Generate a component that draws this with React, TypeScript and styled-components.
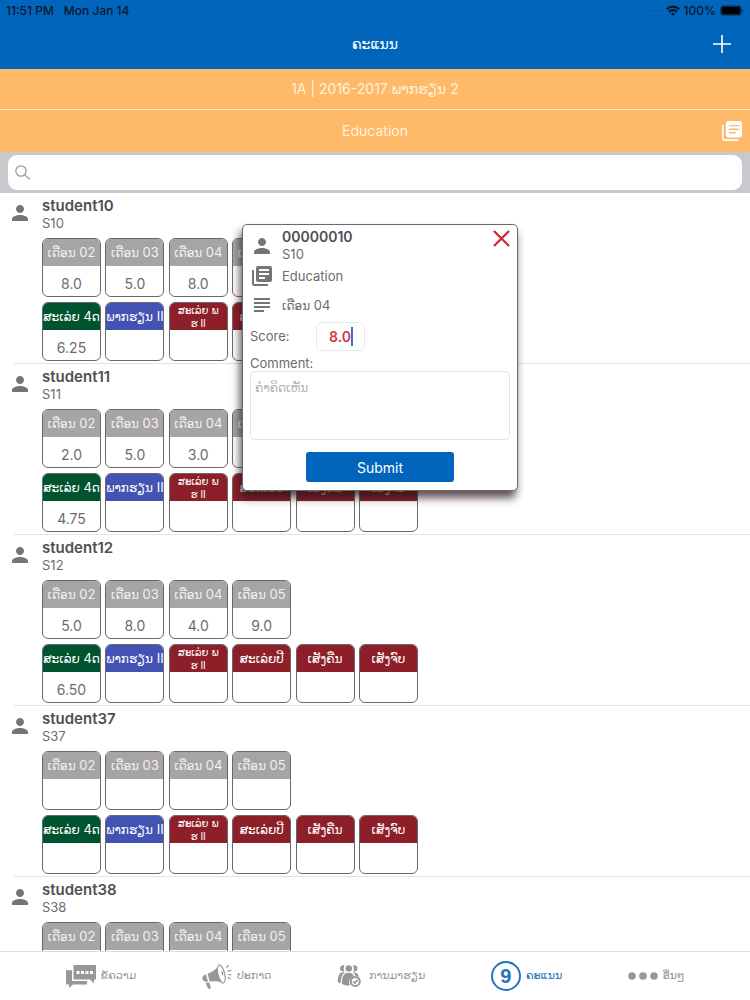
import React from "react";
import styled, { createGlobalStyle } from "styled-components";
import { MdLibraryBooks, MdPerson, MdSubject } from "react-icons/md";

const GlobalStyle = createGlobalStyle`
  *, *::before, *::after { box-sizing: border-box; }
  body { margin: 0; background: #fff; }
  button, input, textarea { font: inherit; }
`;

const colors = {
  blue: "#0265bc",
  orange: "#feba69",
  grey: "#a6a4a7",
  green: "#00532f",
  indigo: "#4253b4",
  red: "#8d1f29",
  text: "#6c6c6e",
};

const Screen = styled.div`
  position: relative;
  display: flex;
  flex-direction: column;
  height: 100vh;
  overflow: hidden;
  background: #fff;
  color: ${colors.text};
  font-family: Inter, "DejaVu Sans", sans-serif;
  font-size: 14px;
`;

const Lao = styled.span<{ $size?: number }>`
  font-family: "DejaVu Sans", sans-serif;
  font-size: ${({ $size = 12 }) => $size}px;
`;

const Header = styled.header`
  flex: none;
  height: 69px;
  background: ${colors.blue};
  color: #fff;
`;

const StatusBar = styled.div`
  display: flex;
  align-items: center;
  height: 20px;
  padding: 0 6px;
  color: #06182c;
  font-size: 12px;
  font-weight: 500;
`;

const StatusDate = styled.span`
  margin-left: 10px;
`;

const StatusRight = styled.div`
  display: flex;
  align-items: center;
  gap: 4px;
  margin-left: auto;
`;

const NavBar = styled.div`
  display: grid;
  grid-template-columns: 32px 1fr 32px;
  align-items: center;
  height: 48px;
  padding: 0 12px;
`;

const Title = styled.h1`
  grid-column: 2;
  margin: 0;
  text-align: center;
  font-size: 14px;
  font-weight: 400;
  line-height: 20px;
`;

const IconButton = styled.button`
  display: flex;
  align-items: center;
  justify-content: center;
  padding: 0;
  border: 0;
  background: none;
  color: inherit;
`;

const CloseButton = styled(IconButton)`
  align-self: flex-start;
  padding-top: 2px;
`;

const Band = styled.div<{ $divided?: boolean }>`
  flex: none;
  display: grid;
  grid-template-columns: 24px 1fr 24px;
  align-items: center;
  height: ${({ $divided }) => ($divided ? 41 : 42)}px;
  padding: 0 6px;
  background: ${colors.orange};
  border-bottom: ${({ $divided }) => ($divided ? "1px solid #ffe6c6" : "0")};
  color: #fff1de;
`;

const BandText = styled.div`
  grid-column: 2;
  text-align: center;
  line-height: 20px;
`;

const SearchBar = styled.form`
  flex: none;
  padding: 3px 8px;
  background: #c9c8cc;
`;

const SearchField = styled.label`
  display: flex;
  align-items: center;
  gap: 8px;
  height: 35px;
  padding: 0 7px;
  border-radius: 9px;
  background: #fff;
  color: #9a9a9c;
`;

const SearchInput = styled.input`
  flex: 1;
  min-width: 0;
  border: 0;
  outline: 0;
  background: none;
  color: ${colors.text};
`;

const List = styled.main`
  flex: 1;
  min-height: 0;
  overflow: hidden;
`;

const Student = styled.section`
  display: flex;
  gap: 10px;
  margin-left: 14px;
  padding: 4px 0 2px;
  border-bottom: 1px solid #e2e1e3;
`;

const Avatar = styled.div`
  flex: none;
  width: 24px;
  margin-left: -6px;
  padding-top: 4px;
  color: #757575;
`;

const StudentName = styled.h2<{ $compact?: boolean }>`
  margin: 0;
  color: #4f4f51;
  font-size: ${({ $compact }) => ($compact ? 14 : 15)}px;
  font-weight: 600;
  line-height: 18px;
`;

const StudentCode = styled.p`
  margin: 0;
  font-size: 13px;
  line-height: 17px;
`;

const Scores = styled.dl`
  display: grid;
  grid-template-columns: repeat(6, 59px);
  justify-content: space-between;
  row-gap: 5px;
  width: 376px;
  margin: 6px 0 0;
`;

const Cell = styled.div<{ $first?: boolean }>`
  grid-column: ${({ $first }) => ($first ? "1" : "auto")};
  height: 59px;
  border: 1px solid #69696b;
  border-radius: 6px;
  background: #fff;
  overflow: hidden;
`;

const CellHead = styled.dt<{ $color: string; $small?: boolean }>`
  display: flex;
  align-items: center;
  justify-content: center;
  height: 27px;
  background: ${({ $color }) => $color};
  color: ${({ $color }) => ($color === colors.grey ? "#f1f0f1" : "#fff")};
  font-size: ${({ $small }) => ($small ? 10 : 13)}px;
  line-height: ${({ $small }) => ($small ? 13 : 18)}px;
  text-align: center;
  white-space: ${({ $small }) => ($small ? "normal" : "nowrap")};
`;

const CellValue = styled.dd`
  margin: 0;
  padding-top: 8px;
  line-height: 20px;
  text-align: center;
`;

const Dialog = styled.div`
  position: absolute;
  top: 224px;
  left: 242px;
  width: 276px;
  padding: 3px 7px 8px;
  border: 1px solid #69696b;
  border-radius: 5px;
  background: #fff;
  box-shadow: -2px 7px 9px rgba(40, 20, 25, 0.75);
`;

const DialogRow = styled.div<{ $height: number }>`
  display: flex;
  align-items: center;
  gap: 8px;
  height: ${({ $height }) => $height}px;
  font-size: 13px;

  > svg {
    flex: none;
    color: #757575;
  }
`;

const DialogHeading = styled.div`
  flex: 1;
`;

const ScoreLabel = styled.label`
  width: 58px;
`;

const ScoreField = styled.div`
  display: flex;
  align-items: center;
  justify-content: flex-end;
  width: 49px;
  height: 29px;
  padding-right: 11px;
  border: 1px solid #e9e9ee;
  border-radius: 6px;
`;

const ScoreInput = styled.input`
  width: 25px;
  padding: 0;
  border: 0;
  outline: 0;
  background: none;
  color: #d3393f;
  font-size: 14px;
  font-weight: 600;
  text-align: right;
`;

const Caret = styled.span`
  flex: none;
  width: 2px;
  height: 19px;
  background: #3f6cd0;
`;

const CommentLabel = styled.label`
  display: block;
  margin-top: 4px;
  font-size: 13px;
  line-height: 16px;
`;

const CommentInput = styled.textarea`
  display: block;
  width: 100%;
  height: 69px;
  padding: 7px 4px;
  border: 1px solid #e2e2e6;
  border-radius: 5px;
  outline: 0;
  resize: none;
  font-family: "DejaVu Sans", sans-serif;
  font-size: 12px;
  line-height: 18px;

  &::placeholder {
    color: #b4b2b6;
  }
`;

const SubmitButton = styled.button`
  display: block;
  width: 148px;
  height: 30px;
  margin: 12px auto 0;
  padding: 0;
  border: 0;
  border-radius: 3px;
  background: ${colors.blue};
  color: #fff;
  font-size: 14px;
`;

const TabBar = styled.nav`
  flex: none;
  display: flex;
  align-items: center;
  justify-content: space-evenly;
  height: 49px;
  border-top: 1px solid #dedddf;
  background: #fff;
`;

const Tab = styled.a<{ $active?: boolean }>`
  display: flex;
  align-items: center;
  gap: 5px;
  color: ${({ $active }) => ($active ? "#2673bd" : "#98969a")};
  text-decoration: none;
  line-height: 20px;
`;

const TabBadge = styled.span`
  display: flex;
  align-items: center;
  justify-content: center;
  width: 30px;
  height: 30px;
  border: 2px solid #2673bd;
  border-radius: 50%;
  font-family: "Liberation Sans", sans-serif;
  font-size: 20px;
  font-weight: 700;
`;

const SignalIcon = () => (
  <svg width="14" height="4" viewBox="0 0 14 4" fill="#07509a">
    <path d="M0 2h2v1.500H0zM4 2h2v1.500H4zM8 2h2v1.500H8zM12 2h2v1.500h-2z" />
  </svg>
);

const WifiIcon = () => (
  <svg width="14" height="11" viewBox="0 0 14 11" fill="none" stroke="#06182c" strokeWidth="2.2">
    <path d="M0.8 4.2a8.8 8.8 0 0 1 12.4 0M3 6.9a5.6 5.6 0 0 1 8 0" />
    <path d="M7 10.800 4.900 8.700a3 3 0 0 1 4.200 0z" fill="#06182c" stroke="none" />
  </svg>
);

const BatteryIcon = () => (
  <svg width="24" height="11" viewBox="0 0 24 11">
    <rect x="0.5" y="0.5" width="21" height="10" rx="2.5" fill="none" stroke="#06407c" />
    <rect x="1.5" y="1.5" width="19" height="8" rx="1.5" fill="#000" />
    <path d="M22.7 4v3c.8-.3 1.1-.9 1.1-1.5s-.3-1.2-1.1-1.5z" fill="#06407c" />
  </svg>
);

const PlusIcon = () => (
  <svg width="18" height="18" viewBox="0 0 18 18" stroke="#fff" strokeWidth="1.6">
    <path d="M9 0v18M0 9h18" />
  </svg>
);

const SubjectsIcon = () => (
  <svg width="24" height="24" viewBox="0 0 24 24" fill="none">
    <path d="M2.8 6.5v12.2a2.5 2.5 0 0 0 2.5 2.5h12.2" stroke="#fff" strokeWidth="1.7" strokeLinecap="round" />
    <rect x="5.8" y="2" width="16.2" height="16.4" rx="2.8" fill="#fff" />
    <path d="M9.3 6.6h9.4M9.3 10.2h9.4M9.3 13.8h6" stroke={colors.orange} strokeWidth="1.4" strokeLinecap="round" />
  </svg>
);

const SearchIcon = () => (
  <svg width="15" height="15" viewBox="0 0 15 15" fill="none" stroke="currentColor" strokeWidth="1.3" strokeLinecap="round">
    <circle cx="6" cy="6" r="5.2" />
    <path d="M9.9 9.9l4.3 4.1" />
  </svg>
);

const CloseIcon = () => (
  <svg width="17" height="17" viewBox="0 0 18 18" stroke="#cf2a30" strokeWidth="2.4">
    <path d="M1 1l16 16M17 1 1 17" />
  </svg>
);

const MessagesIcon = () => (
  <svg width="30" height="23" viewBox="0 0 30 23" fill="currentColor">
    <path d="M7.5 0H30v14.4h-2v4l-4.2-4H7.5z" />
    <path d="M0 5.2h6v10.7h15v3.6H7l-4 3.5v-3.5H0z" />
    <path d="M10.5 6h3v3h-3zM15 6h3v3h-3zM19.5 6h3v3h-3zM24 6h3v3h-3z" fill="#fff" />
  </svg>
);

const MegaphoneIcon = () => (
  <svg width="30" height="25" viewBox="0 0 30 25" fill="currentColor">
    <path d="M17 1.2C13.5 6 9.500 8.300 5.500 9.800L7.800 17.700c4-.9 8.800-.6 13.400 1.300z" />
    <path d="M4 10.400C1 11.300 0 13 .4 14.800s2 3.300 5.600 3z" />
    <path d="M3.400 18.800l3.900-.4 1.500 5.300c-.3 1-1.700 1.500-2.700.9z" />
    <ellipse cx="19.300" cy="10" rx="3.300" ry="9.300" transform="rotate(-14 19.300 10)" fill="#fff" stroke="currentColor" strokeWidth="1.200" />
    <path d="M19 7.200c2-.3 3.300 3.500 1.400 4.600z" />
    <path d="M24.300 3.500l2.400-2.200M25.600 7.200l3.600-.9M26 10.500l3.400.4M25.600 13.200l2.800 1.800" stroke="currentColor" strokeWidth="1.200" fill="none" />
  </svg>
);

const AttendanceIcon = () => (
  <svg width="27" height="22" viewBox="0 0 27 22" fill="currentColor">
    <path d="M7.600.6C5.600-.3 3.200.8 3 3.200c0 2.500 2.200 3.900 4.300 3A6 6 0 0 1 7.600.6zM16 .6c2-.9 4.400.2 4.600 2.600 0 2.500-2.200 3.900-4.300 3A6 6 0 0 0 16 .6z" />
    <circle cx="11.800" cy="3.400" r="3.200" />
    <path d="M7 7.300C2.800 7 1 10 .6 16.800c1 .8 2 1.200 3.200 1.400C3.900 13 4.600 9.700 7.800 7.500zM16 7.300c3.300-.1 5.200 1.400 6 4.500l-3.600-.8c-.5-1.600-1.300-2.900-2.600-3.700z" />
    <path d="M11.800 7.700c-4.900 0-6.700 3-7 11 2.200 1.500 5 2.100 8.200 1.600a6 6 0 0 1 4-9c-1-2.500-2.700-3.600-5.200-3.600z" />
    <circle cx="18.300" cy="16.400" r="4.500" fill="#fff" stroke="currentColor" strokeWidth="2" />
    <path d="M16.200 16.500l1.600 1.500 2.800-3.100" fill="none" stroke="currentColor" strokeWidth="1.700" />
  </svg>
);

const MoreIcon = () => (
  <svg width="30" height="8" viewBox="0 0 30 8" fill="currentColor">
    <circle cx="4" cy="4" r="3.800" />
    <circle cx="15" cy="4" r="3.800" />
    <circle cx="26" cy="4" r="3.800" />
  </svg>
);

type StudentData = { name: string; code: string; months: string[]; average: string };

const students: StudentData[] = [
  { name: "student10", code: "S10", months: ["8.0", "5.0", "8.0", ""], average: "6.25" },
  { name: "student11", code: "S11", months: ["2.0", "5.0", "3.0", ""], average: "4.75" },
  { name: "student12", code: "S12", months: ["5.0", "8.0", "4.0", "9.0"], average: "6.50" },
  { name: "student37", code: "S37", months: ["", "", "", ""], average: "" },
  { name: "student38", code: "S38", months: ["", "", "", ""], average: "" },
];

const finals = ["ສະເລ່ຍປີ", "ເສັງຄືນ", "ເສັງຈົບ"];

function StudentRow({ student }: { student: StudentData }) {
  return (
    <Student>
      <Avatar>
        <MdPerson size={24} />
      </Avatar>
      <div>
        <StudentName>{student.name}</StudentName>
        <StudentCode>{student.code}</StudentCode>
        <Scores>
          {student.months.map((score, i) => (
            <Cell key={i}>
              <CellHead $color={colors.grey}>
                <span>
                  <Lao>ເດືອນ</Lao> 0{i + 2}
                </span>
              </CellHead>
              <CellValue>{score}</CellValue>
            </Cell>
          ))}
          <Cell $first>
            <CellHead $color={colors.green}>
              <span>
                <Lao>ສະເລ່ຍ</Lao> 4<Lao>ດ</Lao>
              </span>
            </CellHead>
            <CellValue>{student.average}</CellValue>
          </Cell>
          <Cell>
            <CellHead $color={colors.indigo}>
              <span>
                <Lao>ພາກຮຽນ</Lao> II
              </span>
            </CellHead>
            <CellValue />
          </Cell>
          <Cell>
            <CellHead $color={colors.red} $small>
              <span>
                <Lao $size={10}>ສະເລ່ຍ ພ</Lao>
                <br />
                <Lao $size={10}>ຮ</Lao> II
              </span>
            </CellHead>
            <CellValue />
          </Cell>
          {finals.map((label) => (
            <Cell key={label}>
              <CellHead $color={colors.red}>
                <Lao>{label}</Lao>
              </CellHead>
              <CellValue />
            </Cell>
          ))}
        </Scores>
      </div>
    </Student>
  );
}

function ScoreDialog() {
  return (
    <Dialog role="dialog" aria-label="Score">
      <DialogRow $height={35}>
        <MdPerson size={24} />
        <DialogHeading>
          <StudentName as="h3" $compact>
            00000010
          </StudentName>
          <StudentCode>S10</StudentCode>
        </DialogHeading>
        <CloseButton type="button" aria-label="Close">
          <CloseIcon />
        </CloseButton>
      </DialogRow>
      <DialogRow $height={26}>
        <MdLibraryBooks size={24} />
        <span>Education</span>
      </DialogRow>
      <DialogRow $height={32}>
        <MdSubject size={24} />
        <span>
          <Lao>ເດືອນ</Lao> 04
        </span>
      </DialogRow>
      <DialogRow $height={30}>
        <ScoreLabel htmlFor="score">Score:</ScoreLabel>
        <ScoreField>
          <ScoreInput id="score" defaultValue="8.0" />
          <Caret />
        </ScoreField>
      </DialogRow>
      <CommentLabel htmlFor="comment">Comment:</CommentLabel>
      <CommentInput id="comment" placeholder="ຄຳຄິດເຫັນ" />
      <SubmitButton type="button">Submit</SubmitButton>
    </Dialog>
  );
}

export default function App() {
  return (
    <Screen>
      <GlobalStyle />
      <Header>
        <StatusBar>
          <span>11:51 PM</span>
          <StatusDate>Mon Jan 14</StatusDate>
          <StatusRight>
            <SignalIcon />
            <WifiIcon />
            <span>100%</span>
            <BatteryIcon />
          </StatusRight>
        </StatusBar>
        <NavBar>
          <Title>
            <Lao $size={14}>ຄະແນນ</Lao>
          </Title>
          <IconButton type="button" aria-label="Add">
            <PlusIcon />
          </IconButton>
        </NavBar>
      </Header>
      <Band $divided>
        <BandText>
          1A | 2016-2017 <Lao $size={14}>ພາກຮຽນ</Lao> 2
        </BandText>
      </Band>
      <Band>
        <BandText>Education</BandText>
        <IconButton type="button" aria-label="Subjects">
          <SubjectsIcon />
        </IconButton>
      </Band>
      <SearchBar>
        <SearchField>
          <SearchIcon />
          <SearchInput type="search" aria-label="Search" />
        </SearchField>
      </SearchBar>
      <List>
        {students.map((student) => (
          <StudentRow key={student.name} student={student} />
        ))}
      </List>
      <TabBar>
        <Tab href="#messages">
          <MessagesIcon />
          <Lao $size={11}>ຂໍ້ຄວາມ</Lao>
        </Tab>
        <Tab href="#announcements">
          <MegaphoneIcon />
          <Lao $size={11}>ປະກາດ</Lao>
        </Tab>
        <Tab href="#attendance">
          <AttendanceIcon />
          <Lao $size={11}>ການມາຮຽນ</Lao>
        </Tab>
        <Tab href="#scores" $active>
          <TabBadge>9</TabBadge>
          <Lao $size={11}>ຄະແນນ</Lao>
        </Tab>
        <Tab href="#more">
          <MoreIcon />
          <Lao $size={11}>ອື່ນໆ</Lao>
        </Tab>
      </TabBar>
      <ScoreDialog />
    </Screen>
  );
}
